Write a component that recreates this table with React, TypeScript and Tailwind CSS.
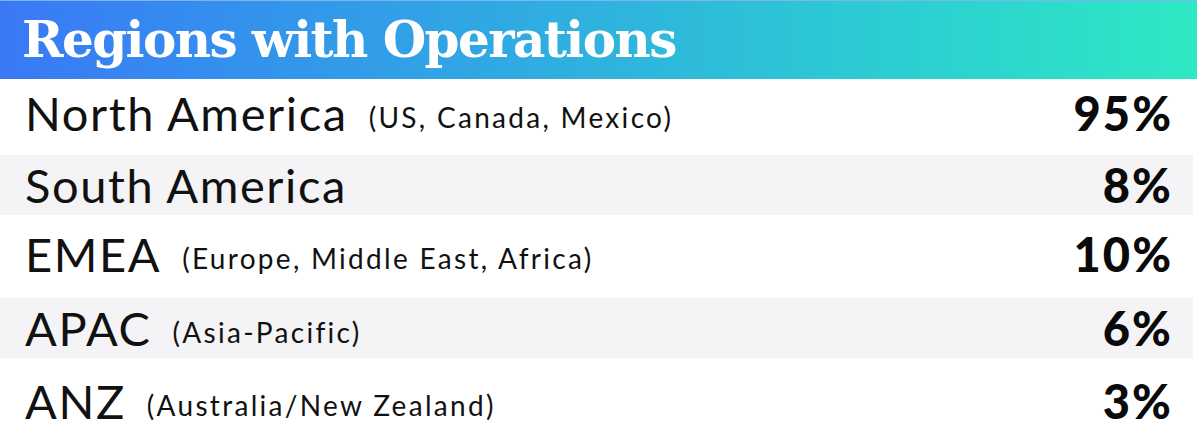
import React from "react";

const rows = [
  { name: "North America", sub: "(US, Canada, Mexico)", pct: "95%", gray: false, cls: "h-[76px] pb-[7px]" },
  { name: "South America", sub: "", pct: "8%", gray: true, cls: "h-[60px]" },
  { name: "EMEA", sub: "(Europe, Middle East, Africa)", pct: "10%", gray: false, cls: "h-[83px] pb-[4px]" },
  { name: "APAC", sub: "(Asia-Pacific)", pct: "6%", gray: true, cls: "h-[60px]" },
  { name: "ANZ", sub: "(Australia/New Zealand)", pct: "3%", gray: false, cls: "h-[73px] pt-[14px]" },
];

export default function App() {
  return (
    <div className="w-[1197px] h-[431px] overflow-hidden bg-white flex flex-col">
      <div className="h-[79px] shrink-0 flex items-center pl-[22px] bg-gradient-to-r from-[#3a78f6] via-[#2fb2de] to-[#2ee9c3] border-t border-[#7fb4f0]">
        <span
          className="text-white font-bold text-[50px] leading-none tracking-[-1.6px]"
          style={{ fontFamily: '"DejaVu Serif", serif' }}
        >
          Regions with Operations
        </span>
      </div>
      {rows.map((r) => (
        <div
          key={r.name}
          className={`shrink-0 flex items-center justify-between pl-[25px] pr-[20px] mr-[4px] ${r.cls} ${r.gray ? "bg-[#f4f3f6]" : "bg-white"}`}
        >
          <div className="text-[#111] whitespace-nowrap" style={{ fontFamily: "Lato, sans-serif" }}>
            <span className="text-[47px] font-normal leading-none tracking-[1.6px]">{r.name}</span>
            {r.sub && (
              <span className="text-[28px] font-normal leading-none ml-[21px] align-[3px] tracking-[2.3px]">{r.sub}</span>
            )}
          </div>
          <div
            className="text-[#0a0a0a] text-[47px] font-black leading-none tracking-[2px]"
            style={{ fontFamily: "Lato, sans-serif" }}
          >
            {r.pct}
          </div>
        </div>
      ))}
    </div>
  );
}
